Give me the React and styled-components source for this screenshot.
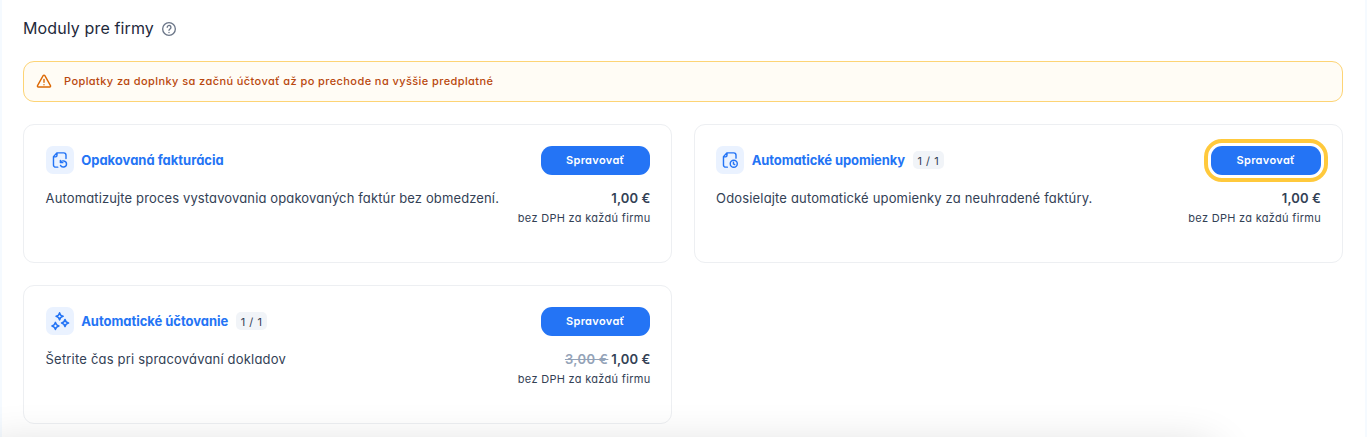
import styled, { createGlobalStyle, css } from "styled-components";

const GlobalStyle = createGlobalStyle`
  * {
    box-sizing: border-box;
  }

  body {
    margin: 0;
    overflow: hidden;
    background: #f5faff;
    color: #334155;
    font-family: Inter, "Noto Sans", sans-serif;
    font-feature-settings: "cv11";
  }
`;

const Page = styled.main`
  height: 437px;
  margin: 0 2px;
  padding: 16px 22px 0 21px;
  background: #fff;
`;

const Heading = styled.header`
  display: flex;
  align-items: center;
  gap: 7px;
  height: 25px;
  margin-bottom: 20px;
  color: #6b7688;
`;

const Title = styled.h1`
  margin: 0;
  color: #1e293b;
  font-size: 16px;
  font-weight: 400;
  line-height: 25px;
  letter-spacing: 0.12px;
`;

const Alert = styled.div`
  display: flex;
  align-items: center;
  gap: 12px;
  height: 41px;
  margin-bottom: 22px;
  padding: 0 12px 1px;
  border: 1px solid #fdd475;
  border-radius: 11px;
  background: #fffcf5;
  color: #b9480e;
  font-size: 11px;
  font-weight: 500;
  letter-spacing: 0.41px;

  svg {
    color: #dc6803;
  }
`;

const Grid = styled.section`
  display: grid;
  grid-template-columns: repeat(2, 649px);
  grid-auto-rows: 139px;
  gap: 22px 21.5px;
`;

const Card = styled.article`
  padding: 21px 21px 21px 21.6px;
  border: 1px solid #edeff2;
  border-radius: 11px;
`;

const CardHeader = styled.div`
  display: flex;
  justify-content: space-between;
  align-items: center;
  height: 28px;
`;

const CardBody = styled.div`
  display: flex;
  justify-content: space-between;
  align-items: flex-start;
  margin-top: 13px;
`;

const Name = styled.div`
  display: flex;
  align-items: center;
`;

const IconBox = styled.span`
  display: grid;
  place-items: center;
  width: 28px;
  height: 28px;
  margin-right: 7.6px;
  border-radius: 7px;
  background: #eaf2ff;
  color: #2474f5;
`;

const CardTitle = styled.h2`
  margin: 0;
  color: #2474f5;
  font-size: 13px;
  font-weight: 700;
  line-height: 20px;
  letter-spacing: ${({ $spacing }) => $spacing}px;
`;

const Badge = styled.span`
  height: 18px;
  margin-left: 7.5px;
  padding: 1px 5px 0;
  border-radius: 5px;
  background: #f1f4f8;
  font-size: 11px;
  line-height: 19px;
  letter-spacing: 0.5px;
`;

const Button = styled.button`
  width: 109.5px;
  height: 29px;
  padding: 0 0 1px;
  border: 0;
  border-radius: 11px;
  background: #2474f5;
  color: #fff;
  font: inherit;
  font-size: 11px;
  font-weight: 600;
  letter-spacing: 0.35px;

  ${({ $highlighted }) =>
    $highlighted &&
    css`
      outline: 4px solid #ffc93c;
      outline-offset: 3px;
    `}
`;

const Description = styled.p`
  margin: 0;
  font-size: 13px;
  line-height: 22px;
  letter-spacing: ${({ $spacing }) => $spacing}px;
`;

const Pricing = styled.div`
  text-align: right;
`;

const Price = styled.div`
  margin-right: -0.5px;
  font-size: 13px;
  font-weight: 600;
  line-height: 22px;
  letter-spacing: 0.1px;

  del {
    margin-right: 3px;
    color: #94a3b8;
    letter-spacing: 0.4px;
  }
`;

const Note = styled.div`
  margin-right: -0.5px;
  font-size: 11px;
  line-height: 18px;
  letter-spacing: 0.3px;
`;

// Sits under the fold, only its shadow reaches into the page
const BottomBar = styled.div`
  position: fixed;
  top: 447px;
  left: -20px;
  right: 150px;
  height: 60px;
  border-radius: 20px;
  box-shadow: 0 0 45px rgba(0, 0, 0, 0.16);
  pointer-events: none;
`;

const stroke = {
  viewBox: "0 0 24 24",
  fill: "none",
  stroke: "currentColor",
  strokeLinecap: "round",
  strokeLinejoin: "round",
};

function HelpIcon() {
  return (
    <svg width="16" height="16" {...stroke} strokeWidth="2">
      <circle cx="12" cy="12" r="9.5" />
      <path d="M9.3 9.500a2.800 2.800 0 1 1 4.400 2.300c-1 .7-1.700 1.100-1.700 2.200M12 17v.2" />
    </svg>
  );
}

function WarningIcon() {
  return (
    <svg width="16" height="16" {...stroke} strokeWidth="2.1">
      <path d="M10.700 3.900 2.300 19c-.5 1 .1 2 1.200 2h17c1.100 0 1.700-1 1.200-2L13.300 3.900c-.6-1-2-1-2.600 0ZM12 9.500V14M12 17.500v.2" />
    </svg>
  );
}

function RecurringIcon() {
  return (
    <svg width="18" height="18" {...stroke} strokeWidth="1.9">
      <path d="M9 21.500H6.300a3 3 0 0 1-3-3v-11l4.500-5H17a3 3 0 0 1 3 3V10M3.500 7.800H6a2 2 0 0 0 2-2V2.700" />
      <path d="M12.500 12.500v3h3.300M12.500 15.500c1.300-3.600 8.200-3 8.200 1.700 0 4.800-6.500 5.300-8 2" />
    </svg>
  );
}

function ReminderIcon() {
  return (
    <svg width="18" height="18" {...stroke} strokeWidth="1.9">
      <path d="M8.500 21.500H6.300a3 3 0 0 1-3-3v-11l4.500-5H17a3 3 0 0 1 3 3V9.500M3.500 7.800H6a2 2 0 0 0 2-2V2.700" />
      <circle cx="17" cy="17" r="4.700" />
      <path d="M16.600 15v2.300l1.700.8" />
    </svg>
  );
}

function SparklesIcon() {
  return (
    <svg width="20" height="20" {...stroke} strokeWidth="1.9">
      <path d="M11.500 2.200c.6 2.800 1.400 3.600 4.200 4.200-2.800.6-3.600 1.400-4.200 4.200-.6-2.800-1.400-3.600-4.200-4.200 2.800-.6 3.600-1.400 4.200-4.200Z" />
      <path d="M18 10.200c.6 2.800 1.400 3.600 4.200 4.200-2.800.6-3.600 1.400-4.200 4.200-.6-2.800-1.400-3.600-4.200-4.200 2.800-.6 3.600-1.400 4.200-4.200Z" />
      <path d="M6.500 13.700c.6 2.800 1.400 3.600 4.200 4.200-2.800.6-3.600 1.400-4.200 4.200-.6-2.800-1.400-3.600-4.200-4.200 2.800-.6 3.600-1.400 4.200-4.200Z" />
    </svg>
  );
}

const modules = [
  {
    name: "Opakovaná fakturácia",
    description: "Automatizujte proces vystavovania opakovaných faktúr bez obmedzení.",
    icon: RecurringIcon,
    titleSpacing: 0,
    textSpacing: 0.13,
  },
  {
    name: "Automatické upomienky",
    description: "Odosielajte automatické upomienky za neuhradené faktúry.",
    icon: ReminderIcon,
    titleSpacing: -0.1,
    textSpacing: 0.16,
    usage: "1 / 1",
    highlighted: true,
  },
  {
    name: "Automatické účtovanie",
    description: "Šetrite čas pri spracovávaní dokladov",
    icon: SparklesIcon,
    titleSpacing: -0.03,
    textSpacing: 0.19,
    usage: "1 / 1",
    oldPrice: "3,00 €",
  },
];

function ModuleCard({ module }) {
  const { name, description, icon: Icon, usage, oldPrice, highlighted, titleSpacing, textSpacing } = module;

  return (
    <Card>
      <CardHeader>
        <Name>
          <IconBox><Icon /></IconBox>
          <CardTitle $spacing={ titleSpacing }>{ name }</CardTitle>
          { usage && <Badge>{ usage }</Badge> }
        </Name>
        <Button $highlighted={ highlighted }>Spravovať</Button>
      </CardHeader>
      <CardBody>
        <Description $spacing={ textSpacing }>{ description }</Description>
        <Pricing>
          <Price>{ oldPrice && <del>{ oldPrice }</del> }1,00 €</Price>
          <Note>bez DPH za každú firmu</Note>
        </Pricing>
      </CardBody>
    </Card>
  );
}

export default function App() {
  return (
    <>
      <GlobalStyle />
      <Page>
        <Heading>
          <Title>Moduly pre firmy</Title>
          <HelpIcon />
        </Heading>
        <Alert>
          <WarningIcon />
          <span>Poplatky za doplnky sa začnú účtovať až po prechode na vyššie predplatné</span>
        </Alert>
        <Grid>
          { modules.map((module) => <ModuleCard key={ module.name } module={ module } />) }
        </Grid>
      </Page>
      <BottomBar />
    </>
  );
}
